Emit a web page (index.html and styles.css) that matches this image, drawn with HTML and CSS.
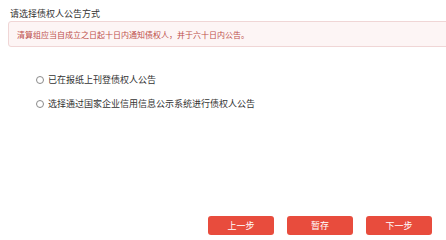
FILE: index.html
```html
<!DOCTYPE html>
<html lang="zh-CN">
<head>
<meta charset="utf-8">
<title>债权人公告</title>
<link rel="stylesheet" href="styles.css">
</head>
<body>
<div class="page">
  <div class="title">请选择债权人公告方式</div>
  <div class="alert">清算组应当自成立之日起十日内通知债权人，并于六十日内公告。</div>
  <div class="options">
    <label class="option"><span class="radio"></span><span>已在报纸上刊登债权人公告</span></label>
    <label class="option"><span class="radio"></span><span>选择通过国家企业信用信息公示系统进行债权人公告</span></label>
  </div>
  <div class="footer">
    <button class="btn">上一步</button>
    <button class="btn">暂存</button>
    <button class="btn">下一步</button>
  </div>
</div>
</body>
</html>
```
FILE: styles.css
```css
html, body {
  margin: 0;
  padding: 0;
  background: #fff;
  overflow: hidden;
}
body {
  font-family: "Noto Sans CJK SC", "Noto Sans", sans-serif;
  color: #333;
}
.page {
  height: 240px;
  display: flex;
  flex-direction: column;
  box-sizing: border-box;
  padding-top: 8px;
  padding-bottom: 5px;
}
.title {
  font-size: 9px;
  line-height: 12px;
  margin-left: 10px;
  color: #333;
}
.alert {
  margin: 1px -20px 0 8px;
  height: 26px;
  box-sizing: border-box;
  border: 1px solid #f0d6d6;
  border-radius: 3px;
  background: #fdf5f5;
  color: #bd504c;
  font-size: 8px;
  display: flex;
  align-items: center;
  padding-left: 8px;
}
.options {
  display: flex;
  flex-direction: column;
  gap: 12px;
  margin-top: 27px;
  margin-left: 36px;
}
.option {
  display: flex;
  align-items: center;
  gap: 4px;
  font-size: 9px;
  line-height: 12px;
  color: #333;
}
.radio {
  width: 8px;
  height: 8px;
  border: 1px solid #8a8a8a;
  border-radius: 50%;
  box-sizing: border-box;
  background: #fff;
}
.footer {
  margin-top: auto;
  display: flex;
  justify-content: flex-end;
  gap: 13px;
  padding-right: 14px;
}
.btn {
  width: 66px;
  height: 19px;
  border: none;
  border-radius: 3px;
  background: #e84c3d;
  color: #fff;
  font-family: "Noto Sans CJK SC", "Noto Sans", sans-serif;
  font-size: 9px;
  padding: 0;
}
```
